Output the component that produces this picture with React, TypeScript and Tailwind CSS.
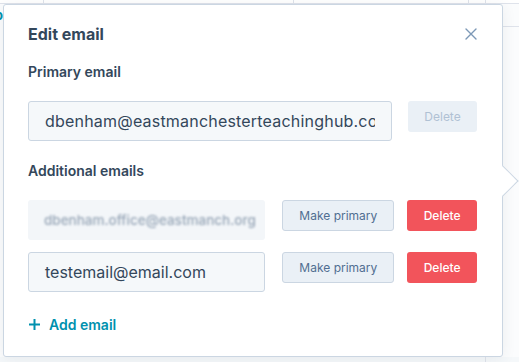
import React from 'react';

function CloseIcon() {
  return (
    <svg width="12" height="12" viewBox="0 0 12 12" fill="none" stroke="#7c98b6" strokeWidth="1.4" strokeLinecap="round">
      <path d="M1 1L11 11M11 1L1 11" />
    </svg>
  );
}

function PlusIcon() {
  return (
    <svg width="11" height="11" viewBox="0 0 11 11" fill="none" stroke="#0091ae" strokeWidth="2">
      <path d="M5.5 0V11M0 5.5H11" />
    </svg>
  );
}

const inputCls =
  'h-10 rounded-[3px] border border-[#cbd6e2] bg-[#f5f8fa] px-4 flex items-center text-[16px] text-[#33475b] whitespace-nowrap';

export default function App() {
  const rows = [
    { email: 'dbenham.office@eastmanch.org', blurred: true },
    { email: 'testemail@email.com', blurred: false },
  ];

  return (
    <div
      className="relative w-[519px] h-[362px] overflow-hidden bg-[#fbfcfd] pt-[4px] pl-[3px]"
      style={{ fontFamily: 'Inter, "Noto Sans", sans-serif' }}
    >
      {/* page behind the popover */}
      <div className="absolute left-0 top-0 w-full h-[4px] border-b border-[#dfe3eb] bg-white" />
      <div className="absolute left-[43px] top-0 h-[4px] border-l border-[#dfe3eb]" />
      <div className="absolute left-[293px] top-0 h-[4px] border-l border-[#dfe3eb]" />
      <div className="absolute left-[468px] top-0 h-[4px] border-l border-[#dfe3eb]" />
      <div className="absolute left-[485px] top-0 h-[4px] border-l border-[#dfe3eb]" />
      <div className="absolute left-[503px] top-[26px] w-[20px] border-t border-[#dfe3eb]" />
      <div className="absolute left-0 top-[357px] w-full h-[5px] bg-[#f5f8fa]" />
      <div className="absolute left-[485px] top-[357px] h-[5px] border-l border-[#dfe3eb]" />
      <div className="absolute left-[-5px] top-[6px] text-[13px] font-bold text-[#0091ae]">o</div>

      {/* popover */}
      <div className="relative w-[500px] h-[353px] rounded-[3px] border border-[#cbd6e2] bg-white shadow-[0_2px_14px_rgba(45,62,80,0.08)] pt-[17px] pl-[24px] pr-[25px]">
        <div className="absolute right-[-12px] top-[165px] w-[22px] h-[22px] rotate-45 bg-white border-t border-r border-[#cbd6e2]" />

        <div className="relative flex items-center justify-between h-6">
          <h2 className="text-[16px] font-bold text-[#33475b]">Edit email</h2>
          <button className="flex items-center justify-center">
            <CloseIcon />
          </button>
        </div>

        <div className="relative mt-4 text-[14px] leading-5 font-semibold text-[#33475b]">Primary email</div>
        <div className="relative mt-[19px] flex items-start gap-4">
          <div className={`${inputCls} w-[364px]`}>
            <div className="w-full overflow-hidden tracking-[0.2px]">dbenham@eastmanchesterteachinghub.com</div>
          </div>
          <button className="h-[31px] w-[70px] rounded-[3px] bg-[#eaf0f6] text-[12px] text-[#b0c1d4]">Delete</button>
        </div>

        <div className="relative mt-5 text-[14px] leading-5 font-semibold text-[#33475b]">Additional emails</div>
        <div className="relative mt-[19px] flex flex-col gap-3">
          {rows.map((row) => (
            <div key={row.email} className="flex items-start">
              {row.blurred ? (
                <div className="h-10 w-[238px] overflow-hidden rounded-[3px] bg-[#f3f6f9] px-4 flex items-center">
                  <span className="blur-[1.2px] whitespace-nowrap text-[13.5px] font-medium text-[#97a6b7]">{row.email}</span>
                </div>
              ) : (
                <div className={`${inputCls} w-[238px]`}>{row.email}</div>
              )}
              <button className="ml-[17px] h-[31px] w-[112px] rounded-[3px] border border-[#cbd6e2] bg-[#eaf0f6] text-[12px] text-[#506e91]">
                Make primary
              </button>
              <button className="ml-[13px] h-[31px] w-[70px] rounded-[3px] bg-[#f2545b] text-[12px] font-medium text-white">
                Delete
              </button>
            </div>
          ))}
        </div>

        <button className="relative mt-[22px] flex items-center gap-[9px] h-5 pl-[1px] text-[14px] font-semibold text-[#0091ae]">
          <PlusIcon />
          Add email
        </button>
      </div>
    </div>
  );
}
